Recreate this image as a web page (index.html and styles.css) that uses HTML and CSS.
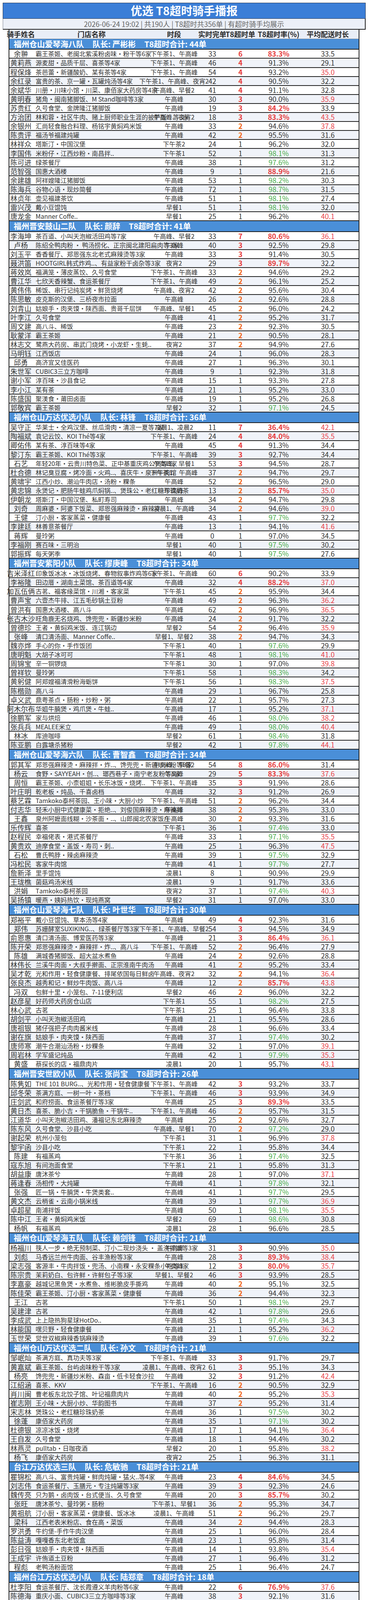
FILE: index.html
```
<!-- T8 overtime rider report -->
<!DOCTYPE html>
<html lang="zh-CN">
<head>
<meta charset="utf-8">
<title>优选 T8超时骑手播报</title>
<link rel="stylesheet" href="styles.css">
</head>
<body>
<div class="page">
<div class="title">优选 T8超时骑手播报</div>
<div class="sub">2026-06-24 19:02 | 共190人 | T8超时共356单 | 有超时骑手均展示</div>
<div class="table">
<div class="head"><span>骑手姓名</span><span>门店名称</span><span>时段</span><span>实时完单</span><span>T8超时单</span><span>T8超时率(%)</span><span>平均配送时长</span></div>

<section class="team">
<div class="th"><span>福州仓山爱琴海八队</span><span>队长: 严彬彬</span><span>T8超时合计: 44单</span></div>
<div class="r"><span>余翀</span><span>霸王茶姬、老闽北紫溪粉卤味·粉干等6家</span><span>下午茶1、午高峰</span><span>33</span><span class="hr">6</span><span class="hr">83.3%</span><span>33.5</span></div>
<div class="r"><span>黄莉燕</span><span>源麦甜·品质千层、喜茶等4家</span><span>下午茶1、午高峰</span><span>46</span><span class="hr">4</span><span>91.3%</span><span>29.1</span></div>
<div class="r"><span>程保烽</span><span>茶芭蕾·新疆酸奶、某有茶等4家</span><span>下午茶1、午高峰</span><span>54</span><span class="hr">4</span><span>93.2%</span><span class="rl">35.0</span></div>
<div class="r"><span>余红录</span><span>富贵的茶、京一罐·瓦罐炖汤等4家</span><span>下午茶1、午高峰、夜宵2</span><span>42</span><span class="hr">4</span><span>90.5%</span><span>32.2</span></div>
<div class="r"><span>余斌华</span><span>川册·川味小馆·川菜、康佰家大药房等4家</span><span>午高峰、早餐2</span><span>41</span><span class="hr">4</span><span>91.1%</span><span>32.8</span></div>
<div class="r"><span>黄明春</span><span>猪角·闽南猪脚饭、M Stand咖啡等3家</span><span>午高峰</span><span>30</span><span class="hr">3</span><span>90.0%</span><span class="rl">35.9</span></div>
<div class="r"><span>苏贵红</span><span>久号食堂、金牌隆江猪脚饭</span><span>午高峰</span><span>19</span><span class="hr">3</span><span class="hr">84.2%</span><span>33.9</span></div>
<div class="r"><span>方治团</span><span>林和蓉·社区牛肉、赌上厨师职业生涯的披萨饭！等3家</span><span>午高峰、夜宵2</span><span>18</span><span class="hr">3</span><span class="hr">83.3%</span><span class="rl">43.5</span></div>
<div class="r"><span>余银州</span><span>汇尚轻食融合料理、杨铭宇黄焖鸡米饭</span><span>午高峰</span><span>33</span><span class="ho">2</span><span>94.6%</span><span class="rl">37.8</span></div>
<div class="r"><span>陈贵评</span><span>福汤爷福建炖罐</span><span>午高峰</span><span>42</span><span class="ho">2</span><span>95.5%</span><span>31.6</span></div>
<div class="r"><span>林祥众</span><span>塔斯汀·中国汉堡</span><span>下午茶2</span><span>24</span><span>1</span><span>96.2%</span><span>32.0</span></div>
<div class="r"><span>李国伟</span><span>米粉仔·江西炒粉·南昌拌..</span><span>下午茶1</span><span>52</span><span>1</span><span class="g">98.1%</span><span>31.3</span></div>
<div class="r"><span>陈可进</span><span>绿茶餐厅</span><span>午高峰</span><span>38</span><span>1</span><span class="g">97.6%</span><span>31.2</span></div>
<div class="r"><span>范智强</span><span>国惠大酒楼</span><span>午高峰</span><span>9</span><span>1</span><span class="hr">88.9%</span><span>21.6</span></div>
<div class="r"><span>余建雄</span><span>阿祥嫂隆江猪脚饭</span><span>午高峰</span><span>53</span><span>1</span><span class="g">98.2%</span><span>30.3</span></div>
<div class="r"><span>陈海兵</span><span>谷物心语·现炒简餐</span><span>午高峰</span><span>72</span><span>1</span><span class="g">98.7%</span><span>31.5</span></div>
<div class="r"><span>林贞年</span><span>壶见福建茶饮</span><span>午高峰</span><span>51</span><span>1</span><span class="g">98.1%</span><span>27.4</span></div>
<div class="r"><span>雷兴茂</span><span>戴小豆馄饨</span><span>早餐1</span><span>51</span><span>1</span><span class="g">98.1%</span><span>32.0</span></div>
<div class="r"><span>唐龙金</span><span>Manner Coffe..</span><span>早餐1</span><span>25</span><span>1</span><span>96.2%</span><span class="rl">40.1</span></div>
</section>

<section class="team">
<div class="th"><span>福州晋安鼓山二队</span><span>队长: 颜辞</span><span>T8超时合计: 41单</span></div>
<div class="r"><span>李海坤</span><span>茶百道、小叫天泡椒活田鸡等7家</span><span>午高峰、早餐2</span><span>33</span><span class="hr">7</span><span class="hr">80.6%</span><span class="rl">36.1</span></div>
<div class="r"><span>卢杨</span><span>陈绍全鸭肉粉 · 鸭汤捞化、正宗闽北建阳扁肉等3家</span><span>午高峰</span><span>40</span><span class="hr">3</span><span>92.5%</span><span>29.8</span></div>
<div class="r"><span>刘玉平</span><span>香香餐厅、郑恩强东北老式麻辣烫等3家</span><span>午高峰</span><span>33</span><span class="hr">3</span><span>91.4%</span><span>30.5</span></div>
<div class="r"><span>聂洪笛</span><span>HOOTGIRL韩式炸鸡..、有益家粉干卤杂等3家</span><span>夜宵2</span><span>29</span><span class="hr">3</span><span class="hr">89.7%</span><span>32.2</span></div>
<div class="r"><span>蒋效岚</span><span>福满笼·薄皮蒸饺、久号食堂</span><span>下午茶1、午高峰</span><span>33</span><span class="ho">2</span><span>94.6%</span><span>29.2</span></div>
<div class="r"><span>曹江华</span><span>七欣天香辣蟹、食运茶餐厅</span><span>下午茶1、午高峰</span><span>49</span><span class="ho">2</span><span>96.1%</span><span>25.2</span></div>
<div class="r"><span>黄伟伟</span><span>稀饭、串行记纯炭烤·鲜货烧烤</span><span>午高峰、夜宵2</span><span>42</span><span class="ho">2</span><span>95.6%</span><span>30.4</span></div>
<div class="r"><span>陈思敏</span><span>皮克斯的汉堡、三桥夜市拉面</span><span>午高峰</span><span>26</span><span class="ho">2</span><span>92.6%</span><span>28.8</span></div>
<div class="r"><span>刘青山</span><span>姑娘手·肉夹馍·陕西面、贵哥千层饼</span><span>午高峰、早餐1</span><span>45</span><span class="ho">2</span><span>96.0%</span><span>24.2</span></div>
<div class="r"><span>叶李江</span><span>久号食堂</span><span>午高峰</span><span>41</span><span class="ho">2</span><span>95.2%</span><span>31.7</span></div>
<div class="r"><span>周文建</span><span>高八斗、稀饭</span><span>午高峰</span><span>23</span><span class="ho">2</span><span>92.3%</span><span>30.5</span></div>
<div class="r"><span>耿蒙洋</span><span>霸王茶姬</span><span>午高峰</span><span>21</span><span class="ho">2</span><span>90.5%</span><span>28.1</span></div>
<div class="r"><span>林志文</span><span>鹭燕大药房、串武门烧烤·小龙虾·生蚝..</span><span>夜宵2</span><span>37</span><span class="ho">2</span><span>94.9%</span><span>27.6</span></div>
<div class="r"><span>马明钰</span><span>江西饭店</span><span>午高峰</span><span>24</span><span>1</span><span>96.0%</span><span>28.3</span></div>
<div class="r"><span>邱勇</span><span>高济宜又佳医药</span><span>午高峰</span><span>27</span><span>1</span><span>96.3%</span><span>30.1</span></div>
<div class="r"><span>朱世军</span><span>CUBIC3三立方咖啡</span><span>午高峰</span><span>9</span><span>1</span><span>92.3%</span><span>31.8</span></div>
<div class="r"><span>谢小军</span><span>淳百味·沙县食记</span><span>午高峰</span><span>15</span><span>1</span><span>93.3%</span><span>27.8</span></div>
<div class="r"><span>李小江</span><span>某有茶</span><span>午高峰</span><span>21</span><span>1</span><span>95.2%</span><span>33.0</span></div>
<div class="r"><span>陈盛国</span><span>聚渼食·莆田卤面</span><span>午高峰</span><span>19</span><span>1</span><span>95.2%</span><span>26.8</span></div>
<div class="r"><span>郭敬宾</span><span>霸王茶姬</span><span>早餐2</span><span>32</span><span>1</span><span class="g">97.1%</span><span>24.5</span></div>
</section>

<section class="team">
<div class="th"><span>福州仓山万达优选小队</span><span>队长: 林锋</span><span>T8超时合计: 36单</span></div>
<div class="r"><span>吴守正</span><span>华莱士·全鸡汉堡、丝瓜滑肉·清凉一夏等7家</span><span>凌晨1、凌晨2</span><span>11</span><span class="hr">7</span><span class="hr">36.4%</span><span class="rl">42.1</span></div>
<div class="r"><span>陶福斌</span><span>袁记云饺、KOI Thé等4家</span><span>下午茶1、午高峰</span><span>24</span><span class="hr">4</span><span class="hr">84.0%</span><span class="rl">35.5</span></div>
<div class="r"><span>卿佑伟</span><span>某有茶、淳百味等4家</span><span>午高峰</span><span>45</span><span class="hr">4</span><span>91.3%</span><span>34.4</span></div>
<div class="r"><span>黎汀东</span><span>霸王茶姬、KOI Thé等3家</span><span>下午茶1、午高峰</span><span>39</span><span class="hr">3</span><span>92.7%</span><span>34.4</span></div>
<div class="r"><span>石艺</span><span>年轻20年·云贵川特色菜、正中基重庆鸡公煲等3家</span><span>午高峰、早餐1</span><span>53</span><span class="hr">3</span><span>94.5%</span><span>28.7</span></div>
<div class="r"><span>杜合德</span><span>林记臭豆腐·烤冷面·火鸡..、喜庆牛·泉州牛肉馆</span><span>下午茶1、午高峰</span><span>37</span><span class="ho">2</span><span>94.7%</span><span>29.7</span></div>
<div class="r"><span>黄啸宇</span><span>江西小炒、潮汕牛肉店·汤粉·粿条</span><span>午高峰</span><span>52</span><span class="ho">2</span><span>96.5%</span><span>29.0</span></div>
<div class="r"><span>黄忠锦</span><span>永煲记·肥肠牛蛙鸡爪焖锅..、煲珠公·老红糖珍珠奶茶</span><span>午高峰</span><span>13</span><span class="ho">2</span><span class="hr">85.7%</span><span class="rl">35.0</span></div>
<div class="r"><span>伊朝龙</span><span>塔斯汀·中国汉堡、私町寿司</span><span>午高峰</span><span>34</span><span class="ho">2</span><span>94.7%</span><span>29.8</span></div>
<div class="r"><span>刘奇</span><span>周麻婆·阿婆下饭菜、郑恩强麻辣烫·麻辣拌</span><span>凌晨1、午高峰</span><span>34</span><span class="ho">2</span><span>94.6%</span><span class="rl">39.0</span></div>
<div class="r"><span>王健</span><span>汀小厨·客家蒸菜·健康餐</span><span>午高峰</span><span>43</span><span>1</span><span class="g">97.7%</span><span>32.2</span></div>
<div class="r"><span>李建廷</span><span>林善意茶餐厅</span><span>午高峰</span><span>13</span><span>1</span><span>94.1%</span><span class="rl">41.6</span></div>
<div class="r"><span>蒋辉</span><span>曼玲粥</span><span>午高峰</span><span>0</span><span>1</span><span>97.0%</span><span>34.5</span></div>
<div class="r"><span>李福刚</span><span>赛百味·三明治</span><span>早餐1</span><span>40</span><span>1</span><span class="g">97.5%</span><span>30.2</span></div>
<div class="r"><span>郭振辉</span><span>每天粥季</span><span>早餐1</span><span>40</span><span>1</span><span class="g">97.5%</span><span>27.6</span></div>
</section>

<section class="team">
<div class="th"><span>福州晋安紫阳小队</span><span>队长: 缪庚峰</span><span>T8超时合计: 34单</span></div>
<div class="r"><span>吉米泽红</span><span>印象饭冰冰·冰饭烧烤、春物叙事炸鸡等6家</span><span>下午茶1、午高峰</span><span>60</span><span class="hr">6</span><span>90.2%</span><span>33.9</span></div>
<div class="r"><span>李裕隆</span><span>田边厝·湖南土菜馆、茶百道等4家</span><span>午高峰</span><span>32</span><span class="hr">4</span><span class="hr">88.2%</span><span class="rl">37.0</span></div>
<div class="r"><span>加瓦伍俩</span><span>古茗、福客缘菜馆·川湘·客家菜</span><span>下午茶1</span><span>45</span><span class="ho">2</span><span>95.9%</span><span>34.4</span></div>
<div class="r"><span>曹声宝</span><span>六壹杰牛排、江五毛砂锅土豆粉</span><span>午高峰</span><span>49</span><span class="ho">2</span><span>96.3%</span><span class="rl">36.2</span></div>
<div class="r"><span>曾洪有</span><span>国惠大酒楼、高八斗</span><span>午高峰</span><span>62</span><span class="ho">2</span><span>96.9%</span><span class="rl">36.5</span></div>
<div class="r"><span>张古木沙</span><span>旺角鹿无名烧鸡、馋兜兜·新疆炒米粉</span><span>午高峰</span><span>24</span><span class="ho">2</span><span>91.7%</span><span>32.2</span></div>
<div class="r"><span>曾德珍</span><span>王者·黄焖鸡米饭、连江锅边</span><span>早餐2</span><span>54</span><span class="ho">2</span><span>96.4%</span><span class="rl">35.9</span></div>
<div class="r"><span>张峰</span><span>清口清汤面、Manner Coffe..</span><span>早餐1、早餐2</span><span>38</span><span class="ho">2</span><span>94.7%</span><span>34.3</span></div>
<div class="r"><span>魏亦烨</span><span>手心的你·手作饭团</span><span>下午茶1</span><span>40</span><span>1</span><span class="g">97.6%</span><span>29.9</span></div>
<div class="r"><span>唐明魁</span><span>大胡子冰可可</span><span>下午茶1</span><span>48</span><span>1</span><span class="g">98.1%</span><span class="rl">41.0</span></div>
<div class="r"><span>周锦宝</span><span>辛一铜锣烧</span><span>下午茶1</span><span>30</span><span>1</span><span>97.0%</span><span class="rl">39.8</span></div>
<div class="r"><span>曾祥钦</span><span>曼玲粥</span><span>下午茶1</span><span>58</span><span>1</span><span class="g">98.3%</span><span>34.2</span></div>
<div class="r"><span>黄躬健</span><span>阿郑嫂福清滑粉海蛎饼</span><span>下午茶1</span><span>56</span><span>1</span><span class="g">98.3%</span><span class="rl">37.5</span></div>
<div class="r"><span>陈楷勋</span><span>高八斗</span><span>午高峰</span><span>29</span><span>1</span><span>96.7%</span><span>25.8</span></div>
<div class="r"><span>卓义武</span><span>鼎粤茶点·肠粉·炒粉·粥</span><span>午高峰</span><span>22</span><span>1</span><span>95.7%</span><span>27.3</span></div>
<div class="r"><span>阿木尔布</span><span>华姐牛腩煲·鸡爪煲·牛蛙..</span><span>午高峰</span><span>17</span><span>1</span><span>95.2%</span><span class="rl">37.1</span></div>
<div class="r"><span>徐鹏军</span><span>家与烘焙</span><span>午高峰</span><span>46</span><span>1</span><span class="g">98.0%</span><span class="rl">38.2</span></div>
<div class="r"><span>张兵兵</span><span>MEALEE米立</span><span>午高峰</span><span>49</span><span>1</span><span class="g">98.0%</span><span class="rl">40.4</span></div>
<div class="r"><span>林冰</span><span>库迪咖啡</span><span>早餐2</span><span>61</span><span>1</span><span class="g">98.4%</span><span>31.8</span></div>
<div class="r"><span>陈亚鹏</span><span>白露塘杀猪粉</span><span>早餐2</span><span>42</span><span>1</span><span class="g">97.8%</span><span class="rl">44.1</span></div>
</section>

<section class="team">
<div class="th"><span>福州仓山爱琴海六队</span><span>队长: 曹智鑫</span><span>T8超时合计: 34单</span></div>
<div class="r"><span>郭其军</span><span>郑恩强麻辣烫·麻辣拌·炸..、馋兜兜·新疆炒米粉等8家</span><span>午高峰、早餐2</span><span>54</span><span class="hr">8</span><span class="hr">86.0%</span><span>31.4</span></div>
<div class="r"><span>杨云</span><span>食野·SAYYEAH·创..、瑯西巷子·南宁老友粉等5家</span><span>午高峰</span><span>29</span><span class="hr">5</span><span class="hr">83.3%</span><span class="rl">37.6</span></div>
<div class="r"><span>周恒</span><span>霸王茶姬、小柰姐姐·长乐冰饭·烧烤..</span><span>下午茶1、午高峰</span><span>35</span><span class="hr">3</span><span>91.9%</span><span>28.6</span></div>
<div class="r"><span>叶庄明</span><span>乾老板·炖品、千喜卤档</span><span>午高峰</span><span>32</span><span class="hr">3</span><span>91.2%</span><span>26.9</span></div>
<div class="r"><span>蔡艺霖</span><span>Tamkoko泰柯茶园、王小味·大厨小炒</span><span>下午茶1、午高峰</span><span>51</span><span class="ho">2</span><span>96.2%</span><span>34.4</span></div>
<div class="r"><span>付志华</span><span>轻禾小厨中式健康菜·拒绝..、刘俊国麻辣烫·麻辣拌</span><span>午高峰</span><span>38</span><span class="ho">2</span><span>95.3%</span><span>33.0</span></div>
<div class="r"><span>王鑫</span><span>泉州阿嬷面线糊·沙茶面·..、山郎闽北农家饭庄</span><span>午高峰</span><span>30</span><span class="ho">2</span><span>93.3%</span><span>31.6</span></div>
<div class="r"><span>乐传辉</span><span>喜茶</span><span>下午茶1</span><span>36</span><span>1</span><span class="g">97.4%</span><span>33.0</span></div>
<div class="r"><span>赵程民</span><span>幸福佬表·港式茶餐厅</span><span>午高峰</span><span>33</span><span>1</span><span class="g">97.1%</span><span class="rl">35.5</span></div>
<div class="r"><span>黄贵欢</span><span>迪摩食堂·盖饭·寿司·刺..</span><span>午高峰</span><span>25</span><span>1</span><span>96.3%</span><span class="rl">47.5</span></div>
<div class="r"><span>石松</span><span>曹氏鸭脖·辣卤麻辣烫</span><span>午高峰</span><span>39</span><span>1</span><span class="g">97.5%</span><span>32.9</span></div>
<div class="r"><span>冯松民</span><span>客家牛肉馆</span><span>午高峰</span><span>41</span><span>1</span><span class="g">97.7%</span><span>27.7</span></div>
<div class="r"><span>詹新泽</span><span>里手馄饨</span><span>凌晨1</span><span>8</span><span>1</span><span>90.9%</span><span>29.9</span></div>
<div class="r"><span>王珑樵</span><span>菌菇鸡汤米线</span><span>凌晨1</span><span>9</span><span>1</span><span>91.7%</span><span>33.6</span></div>
<div class="r"><span>洪娟</span><span>Tamkoko泰柯茶园</span><span>夜宵2</span><span>37</span><span>1</span><span class="g">97.4%</span><span class="rl">40.3</span></div>
<div class="r"><span>吴扬镇</span><span>暖燕·姨妈热饮·现炖燕窝</span><span>早餐2</span><span>31</span><span>1</span><span>97.0%</span><span>33.0</span></div>
</section>

<section class="team">
<div class="th"><span>福州仓山爱琴海七队</span><span>队长: 叶世华</span><span>T8超时合计: 30单</span></div>
<div class="r"><span>郑裕平</span><span>戴小豆馄饨、草本汤等4家</span><span>午高峰</span><span>49</span><span class="hr">4</span><span>92.3%</span><span>31.6</span></div>
<div class="r"><span>郑伟</span><span>苏姗酵室SUXIKING..、绿茶餐厅等3家</span><span>下午茶1、午高峰、早餐2</span><span>54</span><span class="hr">3</span><span>94.5%</span><span>34.9</span></div>
<div class="r"><span>俞恩惠</span><span>清口清汤面、博爱医药等3家</span><span>午高峰</span><span>21</span><span class="hr">3</span><span class="hr">86.4%</span><span class="rl">36.1</span></div>
<div class="r"><span>陈开荣</span><span>郑恩强麻辣烫·麻辣拌·炸..、高八斗</span><span>下午茶1、午高峰</span><span>52</span><span class="ho">2</span><span>96.4%</span><span>27.9</span></div>
<div class="r"><span>陈雄</span><span>满城香猪脚饭、超大盆水煮鱼</span><span>午高峰</span><span>24</span><span class="ho">2</span><span>92.6%</span><span>28.8</span></div>
<div class="r"><span>林伟长</span><span>兰溪牛肉面·大叔手擀面、正宗淮南牛肉汤</span><span>午高峰</span><span>41</span><span class="ho">2</span><span>95.2%</span><span>33.4</span></div>
<div class="r"><span>吴才乾</span><span>光和作用·轻食健康餐、排尾依国每日鲜卤</span><span>午高峰、夜宵2</span><span>32</span><span class="ho">2</span><span>94.1%</span><span class="rl">36.4</span></div>
<div class="r"><span>张良杰</span><span>越秀和记·鲜炒牛肉饭、高八斗</span><span>午高峰</span><span>12</span><span class="ho">2</span><span class="hr">85.7%</span><span class="rl">43.8</span></div>
<div class="r"><span>冯双</span><span>包鲜十里·小笼包、7-11便利店</span><span>早餐2</span><span>46</span><span class="ho">2</span><span>96.0%</span><span>32.2</span></div>
<div class="r"><span>赵彦星</span><span>好药师大药房仓山店</span><span>下午茶1</span><span>55</span><span>1</span><span class="g">98.2%</span><span>27.5</span></div>
<div class="r"><span>林心武</span><span>古茗</span><span>下午茶1</span><span>25</span><span>1</span><span>96.4%</span><span>33.8</span></div>
<div class="r"><span>胡剑平</span><span>小叫天泡椒活田鸡</span><span>午高峰</span><span>21</span><span>1</span><span>95.5%</span><span>28.6</span></div>
<div class="r"><span>唐祖银</span><span>猪仔强把子肉肉酱米线</span><span>午高峰</span><span>28</span><span>1</span><span>96.6%</span><span>33.4</span></div>
<div class="r"><span>谢在旗</span><span>姑娘手·肉夹馍·陕西面</span><span>午高峰</span><span>37</span><span>1</span><span class="g">97.4%</span><span>30.2</span></div>
<div class="r"><span>唐师寒</span><span>潮牛合潮汕汤粉·炒粿条</span><span>午高峰</span><span>32</span><span>1</span><span>97.0%</span><span class="rl">39.1</span></div>
<div class="r"><span>周岩林</span><span>学军盛记炖品</span><span>午高峰</span><span>42</span><span>1</span><span class="g">97.9%</span><span class="rl">35.3</span></div>
<div class="r"><span>黄盛</span><span>蔡探长的店•福鼎肉片</span><span>凌晨1</span><span>20</span><span>1</span><span>95.7%</span><span class="rl">43.1</span></div>
</section>

<section class="team">
<div class="th"><span>福州晋安世欧小队</span><span>队长: 张尚宝</span><span>T8超时合计: 26单</span></div>
<div class="r"><span>陈隽如</span><span>THE 101 BURG..、光和作用·轻食健康餐</span><span>下午茶1、午高峰</span><span>42</span><span class="hr">3</span><span>93.2%</span><span>33.7</span></div>
<div class="r"><span>邱冬荣</span><span>茶满方庭、一树一叶·茶档</span><span>下午茶1、午高峰</span><span>46</span><span class="hr">3</span><span>93.9%</span><span>34.9</span></div>
<div class="r"><span>庄剑武</span><span>和府捞面、食运茶餐厅等3家</span><span>午高峰</span><span>25</span><span class="hr">3</span><span class="hr">89.3%</span><span>33.5</span></div>
<div class="r"><span>黄日杰</span><span>喜茶、脆小吉·干锅脆鱼·干锅牛..</span><span>下午茶1、午高峰</span><span>46</span><span class="ho">2</span><span>95.7%</span><span>31.5</span></div>
<div class="r"><span>江道华</span><span>小叫天泡椒活田鸡、潘福记东北麻辣烫</span><span>午高峰</span><span>25</span><span class="ho">2</span><span>92.6%</span><span>32.7</span></div>
<div class="r"><span>陈东风</span><span>久号食堂、沙县小吃</span><span>午高峰、早餐1</span><span>70</span><span class="ho">2</span><span class="g">97.2%</span><span>29.0</span></div>
<div class="r"><span>谢起荣</span><span>杭州小笼包</span><span>下午茶1</span><span>31</span><span>1</span><span>96.9%</span><span class="rl">37.8</span></div>
<div class="r"><span>黎宇函</span><span>沙县小吃</span><span>下午茶1</span><span>22</span><span>1</span><span>95.8%</span><span>34.4</span></div>
<div class="r"><span>陈建</span><span>有福蒸鸡</span><span>下午茶1</span><span>36</span><span>1</span><span class="g">97.4%</span><span>32.5</span></div>
<div class="r"><span>寇东旭</span><span>有间泡面食堂</span><span>下午茶1</span><span>21</span><span>1</span><span>95.8%</span><span>31.3</span></div>
<div class="r"><span>胡益康</span><span>唐沐茶兮</span><span>午高峰</span><span>28</span><span>1</span><span>97.0%</span><span class="rl">37.1</span></div>
<div class="r"><span>蒋逢春</span><span>汤相传·大炖罐</span><span>午高峰</span><span>41</span><span>1</span><span class="g">97.8%</span><span>32.1</span></div>
<div class="r"><span>张强</span><span>匠一锅·牛腩煲·牛煲类套..</span><span>午高峰</span><span>41</span><span>1</span><span class="g">97.7%</span><span>29.5</span></div>
<div class="r"><span>黄文杰</span><span>云梢雀·云南小锅米线</span><span>午高峰</span><span>39</span><span>1</span><span class="g">97.7%</span><span class="rl">36.9</span></div>
<div class="r"><span>卓超星</span><span>南浦拌饭</span><span>午高峰</span><span>50</span><span>1</span><span class="g">98.1%</span><span class="rl">35.5</span></div>
<div class="r"><span>陈中江</span><span>王者·黄焖鸡米饭</span><span>早餐2</span><span>69</span><span>1</span><span class="g">98.6%</span><span>30.8</span></div>
<div class="r"><span>杨帆</span><span>有福蒸鸡</span><span>凌晨1</span><span>28</span><span>1</span><span>96.6%</span><span>28.5</span></div>
</section>

<section class="team">
<div class="th"><span>福州仓山爱琴海五队</span><span>队长: 赖剑锋</span><span>T8超时合计: 21单</span></div>
<div class="r"><span>杨福川</span><span>筷人一步·绝无预制菜、汀小二现炒浇头 · 盖浇拌饭等3家</span><span>午高峰</span><span>31</span><span class="hr">3</span><span>90.9%</span><span class="rl">35.0</span></div>
<div class="r"><span>刘彪</span><span>马香远兰州牛肉面、谷丰渔粉等3家</span><span>午高峰</span><span>28</span><span class="hr">3</span><span class="hr">89.3%</span><span class="rl">38.4</span></div>
<div class="r"><span>梁志强</span><span>客源丰·牛肉拌饭·兜汤、小南粿·永安粿条小吃等3家</span><span>午高峰</span><span>12</span><span class="hr">3</span><span class="hr">80.0%</span><span class="rl">35.7</span></div>
<div class="r"><span>陈宗贵</span><span>茉莉奶白、包许鲜·许鲜包子等3家</span><span>早餐1、早餐2</span><span>46</span><span class="hr">3</span><span>93.9%</span><span>28.5</span></div>
<div class="r"><span>李嘉豪</span><span>越城记黑鱼煲·水煮鱼、维彬脆皮手撕鸡</span><span>午高峰</span><span>40</span><span class="ho">2</span><span>95.1%</span><span>32.5</span></div>
<div class="r"><span>陈佳荣</span><span>霸王茶姬、汀小厨·客家蒸菜·健康餐</span><span>午高峰</span><span>36</span><span class="ho">2</span><span>94.4%</span><span>32.3</span></div>
<div class="r"><span>王江</span><span>古茗</span><span>下午茶1</span><span>50</span><span>1</span><span class="g">98.1%</span><span>29.7</span></div>
<div class="r"><span>吴建津</span><span>古茗</span><span>午高峰</span><span>42</span><span>1</span><span class="g">97.8%</span><span>29.6</span></div>
<div class="r"><span>李成武</span><span>上上隐热狗星球HotDo..</span><span>午高峰</span><span>35</span><span>1</span><span class="g">97.4%</span><span>34.3</span></div>
<div class="r"><span>林能国</span><span>嘿贝野·轻食健康餐</span><span>午高峰</span><span>21</span><span>1</span><span>95.2%</span><span class="rl">36.2</span></div>
<div class="r"><span>玉世荣</span><span>觉世双椒麻辣香锅麻辣烫</span><span>午高峰</span><span>39</span><span>1</span><span class="g">97.6%</span><span>32.2</span></div>
</section>

<section class="team">
<div class="th"><span>福州仓山万达优选二队</span><span>队长: 孙文</span><span>T8超时合计: 21单</span></div>
<div class="r"><span>邹岷灿</span><span>茶满方庭、真功夫等3家</span><span>下午茶1、午高峰</span><span>33</span><span class="hr">3</span><span>91.7%</span><span>29.7</span></div>
<div class="r"><span>黄嘉斌</span><span>霸王茶姬、台屿卤味粉干等3家</span><span>凌晨1、午高峰、夜宵2</span><span>61</span><span class="hr">3</span><span>95.1%</span><span>34.3</span></div>
<div class="r"><span>杨亮</span><span>馋兜兜·新疆炒米粉、森亩·低卡轻食沙拉</span><span>午高峰</span><span>32</span><span class="hr">3</span><span>91.2%</span><span class="rl">42.4</span></div>
<div class="r"><span>江绍涵</span><span>喜茶、KKV</span><span>下午茶1、午高峰</span><span>16</span><span class="ho">2</span><span>90.5%</span><span>32.9</span></div>
<div class="r"><span>肖川闽</span><span>曹老板东北饺子馆、叶记福鼎肉片</span><span>午高峰</span><span>40</span><span class="ho">2</span><span>95.2%</span><span class="rl">35.3</span></div>
<div class="r"><span>崔志刚</span><span>王小味·大厨小炒、华韵图书</span><span>午高峰</span><span>37</span><span class="ho">2</span><span>95.2%</span><span>31.4</span></div>
<div class="r"><span>宋志林</span><span>煲珠公·老红糖珍珠奶茶</span><span>午高峰</span><span>36</span><span>1</span><span class="g">97.5%</span><span>30.2</span></div>
<div class="r"><span>徐蓬</span><span>康佰家大药房</span><span>午高峰</span><span>35</span><span>1</span><span class="g">97.1%</span><span>30.2</span></div>
<div class="r"><span>杜德银</span><span>凉凉冰饭·烧烤</span><span>午高峰</span><span>17</span><span>1</span><span>94.1%</span><span class="rl">36.4</span></div>
<div class="r"><span>王自发</span><span>久号食堂</span><span>午高峰</span><span>18</span><span>1</span><span>94.4%</span><span>30.2</span></div>
<div class="r"><span>林燕灵</span><span>pulltab·日咖夜酒</span><span>早餐2</span><span>20</span><span>1</span><span>95.8%</span><span class="rl">38.2</span></div>
<div class="r"><span>杨飞</span><span>康佰家大药房</span><span>夜宵2</span><span>25</span><span>1</span><span>96.3%</span><span>31.1</span></div>
</section>

<section class="team">
<div class="th"><span>台江万达优选三队</span><span>队长: 危敏驰</span><span>T8超时合计: 21单</span></div>
<div class="r"><span>瞿锦松</span><span>高八斗、富贵炖罐·鲜肉炖罐·猛火..等4家</span><span>午高峰</span><span>23</span><span class="hr">4</span><span class="hr">84.6%</span><span>34.5</span></div>
<div class="r"><span>刘志伟</span><span>食运茶餐厅、玉膳元·专注炖罐等3家</span><span>午高峰</span><span>39</span><span class="hr">3</span><span>92.3%</span><span>24.6</span></div>
<div class="r"><span>魏传亮</span><span>只为鹅·卤肉饭·台式便当、久号食堂</span><span>午高峰</span><span>20</span><span class="hr">3</span><span class="hr">85.7%</span><span>30.2</span></div>
<div class="r"><span>张旺</span><span>唐沐茶兮、曼玲粥·肠粉</span><span>下午茶1、早餐1</span><span>36</span><span class="ho">2</span><span>95.3%</span><span>34.7</span></div>
<div class="r"><span>黄祖航</span><span>汀小厨·客家蒸菜·健康餐、饭冰冰</span><span>凌晨1、午高峰</span><span>51</span><span class="ho">2</span><span>96.2%</span><span>29.7</span></div>
<div class="r"><span>梁科</span><span>江西老表米粉店、食在高·菜饭</span><span>午高峰</span><span>34</span><span class="ho">2</span><span>94.4%</span><span>28.3</span></div>
<div class="r"><span>罗洪勇</span><span>牛约堡-手作牛肉汉堡</span><span>午高峰</span><span>25</span><span>1</span><span>96.0%</span><span>28.4</span></div>
<div class="r"><span>陈益涛</span><span>嘎嘎香东北老饭盒</span><span>午高峰</span><span>23</span><span>1</span><span>95.8%</span><span>31.4</span></div>
<div class="r"><span>彭日强</span><span>姑娘手·肉夹馍·陕西面</span><span>午高峰</span><span>14</span><span>1</span><span>93.8%</span><span class="rl">35.4</span></div>
<div class="r"><span>王成宇</span><span>许侑道土豆粉</span><span>午高峰</span><span>27</span><span>1</span><span>96.4%</span><span>31.2</span></div>
<div class="r"><span>程彪</span><span>老鸭汤粉面馆</span><span>午高峰</span><span>25</span><span>1</span><span>96.4%</span><span>24.7</span></div>
</section>

<section class="team">
<div class="th"><span>福州台江万达优选小队</span><span>队长: 陆郑章</span><span>T8超时合计: 18单</span></div>
<div class="r"><span>杜李阳</span><span>食运茶餐厅、沈长霞遵义羊肉粉等6家</span><span>午高峰</span><span>22</span><span class="hr">6</span><span class="hr">76.9%</span><span class="rl">37.6</span></div>
<div class="r"><span>陈德海</span><span>重庆小面、CUBIC3三立方咖啡等3家</span><span>午高峰</span><span>38</span><span class="hr">3</span><span>92.1%</span><span>31.6</span></div>
<div class="r"><span>王忠贤</span><span>南浦拌饭、沐森轻食沙拉·健康餐</span><span>午高峰</span><span>27</span><span class="ho">2</span><span>93.3%</span><span>24.0</span></div>
<div class="r"><span>程相财</span><span>霸王茶姬</span><span>下午茶1</span><span>64</span><span>1</span><span class="g">98.5%</span><span>25.0</span></div>
<div class="r"><span>林鸿</span><span>永辉超市</span><span>下午茶1</span><span>27</span><span>1</span><span>96.6%</span><span>29.4</span></div>
<div class="r"><span>林积营</span><span>汉堡王</span><span>午高峰</span><span>41</span><span>1</span><span class="g">97.7%</span><span>31.5</span></div>
<div class="r"><span>刘基强</span><span>刘文祥麻辣烫</span><span>午高峰</span><span>18</span><span>1</span><span>95.2%</span><span class="rl">36.3</span></div>
<div class="r"><span>李敏辉</span><span>食运茶餐厅</span><span>午高峰</span><span>23</span><span>1</span><span>95.8%</span><span>29.7</span></div>
<div class="r"><span>刘昌腾</span><span>奈雪的茶</span><span>午高峰</span><span>28</span><span>1</span><span>96.8%</span><span>31.6</span></div>
<div class="r"><span>许伟滨</span><span>谷之尚·农物餐厅</span><span>午高峰</span><span>34</span><span>1</span><span class="g">97.2%</span><span>27.3</span></div>
</section>

<section class="team">
<div class="th"><span>福州城门优选小队</span><span>队长: 王军</span><span>T8超时合计: 17单</span></div>
<div class="r"><span>任宇</span><span>塔斯汀·中国汉堡、霸王茶姬</span><span>下午茶1、午高峰</span><span>27</span><span class="ho">2</span><span>92.6%</span><span>25.5</span></div>
<div class="r"><span>李世接</span><span>68食堂、汤岩泉·炖罐·猛火现炒</span><span>午高峰</span><span>32</span><span class="ho">2</span><span>93.8%</span><span>34.2</span></div>
<div class="r"><span>林勇</span><span>叶记老饭堂、猪仔强把子肉肉酱米线</span><span>午高峰</span><span>39</span><span class="ho">2</span><span>95.2%</span><span>27.7</span></div>
<div class="r"><span>吴浩</span><span>德克士、鸭御阁·北京烤鸭</span><span>夜宵2</span><span>28</span><span class="ho">2</span><span>93.3%</span><span>25.9</span></div>
<div class="r"><span>曹吉元</span><span>福龙腾食堂·新鲜现炒</span><span>下午茶2</span><span>33</span><span>1</span><span class="g">97.1%</span><span>28.3</span></div>
<div class="r"><span>季立龙</span><span>霸王茶姬</span><span>午高峰</span><span>39</span><span>1</span><span class="g">97.5%</span><span>31.3</span></div>
<div class="r"><span>邦云</span><span>SANFU三福</span><span>午高峰</span><span>28</span><span>1</span><span>96.6%</span><span>24.5</span></div>
<div class="r"><span>陈翔希</span><span>很有料叫花鸡</span><span>午高峰</span><span>27</span><span>1</span><span>96.6%</span><span>25.7</span></div>
<div class="r"><span>陈彪</span><span>塔斯汀·中国汉堡</span><span>午高峰</span><span>31</span><span>1</span><span>96.8%</span><span>23.6</span></div>
<div class="r"><span>王锦超</span><span>光和作用·轻食健康餐</span><span>午高峰</span><span>47</span><span>1</span><span class="g">98.0%</span><span>25.6</span></div>
<div class="r"><span>张银军</span><span>田边厝·湖南土菜馆</span><span>午高峰</span><span>36</span><span>1</span><span class="g">97.3%</span><span>26.3</span></div>
<div class="r"><span>陈波</span><span>库迪咖啡</span><span>午高峰</span><span>36</span><span>1</span><span class="g">97.5%</span><span>21.9</span></div>
<div class="r"><span>陈龙</span><span>益禾堂</span><span>夜宵2</span><span>13</span><span>1</span><span>92.9%</span><span>31.2</span></div>
</section>

<section class="team">
<div class="th"><span>福州仓山爱琴海三队</span><span>队长: 陈绪彬</span><span>T8超时合计: 13单</span></div>
<div class="r"><span>王治清</span><span>稻香荷·中式健康菜、赛百味·三明治等4家</span><span>午高峰</span><span>37</span><span class="hr">4</span><span>90.2%</span><span class="rl">35.1</span></div>
<div class="r"><span>叶智梁</span><span>鲜香卤味、新疆兄弟烧烤店</span><span>凌晨1</span><span>9</span><span class="ho">2</span><span class="hr">83.3%</span><span class="rl">35.7</span></div>
<div class="r"><span>陈鸿炜</span><span>85度C·面包·蛋糕·饮..</span><span>午高峰</span><span>12</span><span>1</span><span>92.9%</span><span>34.1</span></div>
<div class="r"><span>王宫印</span><span>沙县小吃</span><span>午高峰</span><span>37</span><span>1</span><span class="g">97.5%</span><span class="rl">38.2</span></div>
<div class="r"><span>林振宇</span><span>学军盛记炖品</span><span>午高峰</span><span>19</span><span>1</span><span>94.7%</span><span class="rl">36.4</span></div>
<div class="r"><span>彭延方</span><span>栋仔咖喱蛋包饭</span><span>午高峰</span><span>43</span><span>1</span><span class="g">97.8%</span><span>33.3</span></div>
<div class="r"><span>蔡伟</span><span>江西饭店</span><span>午高峰</span><span>42</span><span>1</span><span class="g">97.7%</span><span>33.0</span></div>
<div class="r"><span>钟家荣</span><span>小湘味-现炒湖南菜</span><span>午高峰</span><span>11</span><span>1</span><span>91.7%</span><span class="rl">36.6</span></div>
<div class="r"><span>唐云飞</span><span>古茗</span><span>早餐2</span><span>56</span><span>1</span><span class="g">98.2%</span><span>34.2</span></div>
</section>
</div>
</div>
</body>
</html>
```

FILE: styles.css
```
/* 优选 T8超时骑手播报 — styles */
html, body {
  margin: 0;
  padding: 0;
}

body {
  background: #ffffff;
  color: #333333;
  font-family: "Noto Sans CJK SC", "Noto Sans", "Liberation Sans", sans-serif;
}

.page {
  box-sizing: border-box;
  padding-top: 7px;
}

.title {
  box-sizing: border-box;
  margin: 0 6px 0 7px;
  height: 41.3px;
  background: #3b7ed7;
  border: 1px solid #24324a;
  color: #ffffff;
  font-size: 29px;
  font-weight: 700;
  line-height: 34px;
  display: flex;
  align-items: center;
  justify-content: center;
  padding-bottom: 3px;
}

.sub {
  box-sizing: border-box;
  margin: 0 6px 0 7px;
  height: 27.7px;
  background: #ecf0f8;
  border-left: 1px solid #7d8591;
  border-right: 2px solid #222222;
  border-bottom: 2px solid #222222;
  color: #666666;
  font-size: 18px;
  line-height: 22px;
  display: flex;
  align-items: center;
  justify-content: center;
  white-space: nowrap;
}

.table {
  box-sizing: border-box;
  margin-left: 22px;
  width: 899px;
}

.team {
  display: block;
  margin: 0;
}

.head,
.r {
  box-sizing: border-box;
  display: grid;
  grid-template-columns: 59.2px 302.8px 120px 76px 68px 128px 124px 1fr;
  grid-template-rows: 100%;
  align-items: center;
  border-left: 2px solid #1e1e1e;
  border-right: 2px solid #1e1e1e;
}

.head > span,
.r > span {
  box-sizing: border-box;
  display: flex;
  justify-content: center;
  white-space: nowrap;
  line-height: 21px;
}

.head {
  height: 24px;
  background: #e9eef7;
  border-bottom: 1px solid #8a8f98;
  font-size: 18px;
  font-weight: 700;
  color: #2a2a2a;
}

.th {
  box-sizing: border-box;
  height: 27.3px;
  background: #4a8fd8;
  border-left: 2px solid #1e1e1e;
  border-right: 2px solid #1e1e1e;
  border-bottom: 2px solid #1e1e1e;
  display: flex;
  align-items: center;
  gap: 22px;
  padding-left: 11px;
  color: #ffffff;
  font-size: 20px;
  font-weight: 700;
  line-height: 24px;
  white-space: nowrap;
}

.r {
  height: 23.12px;
  background: #ffffff;
  border-bottom: 2px solid #222222;
  font-size: 18px;
  color: #333333;
}

.team .r:nth-child(odd) {
  background: #f0f3f9;
}

.r > span:nth-child(2) {
  justify-content: flex-start;
  padding-left: 8px;
  font-size: 16px;
}

.r > span:nth-child(3) {
  font-size: 16px;
}

.hr {
  color: #e63a3a;
  font-weight: 700;
}

.ho {
  color: #f0600e;
  font-weight: 700;
}

.g {
  color: #4cad4c;
}

.rl {
  color: #e8424a;
}
```
